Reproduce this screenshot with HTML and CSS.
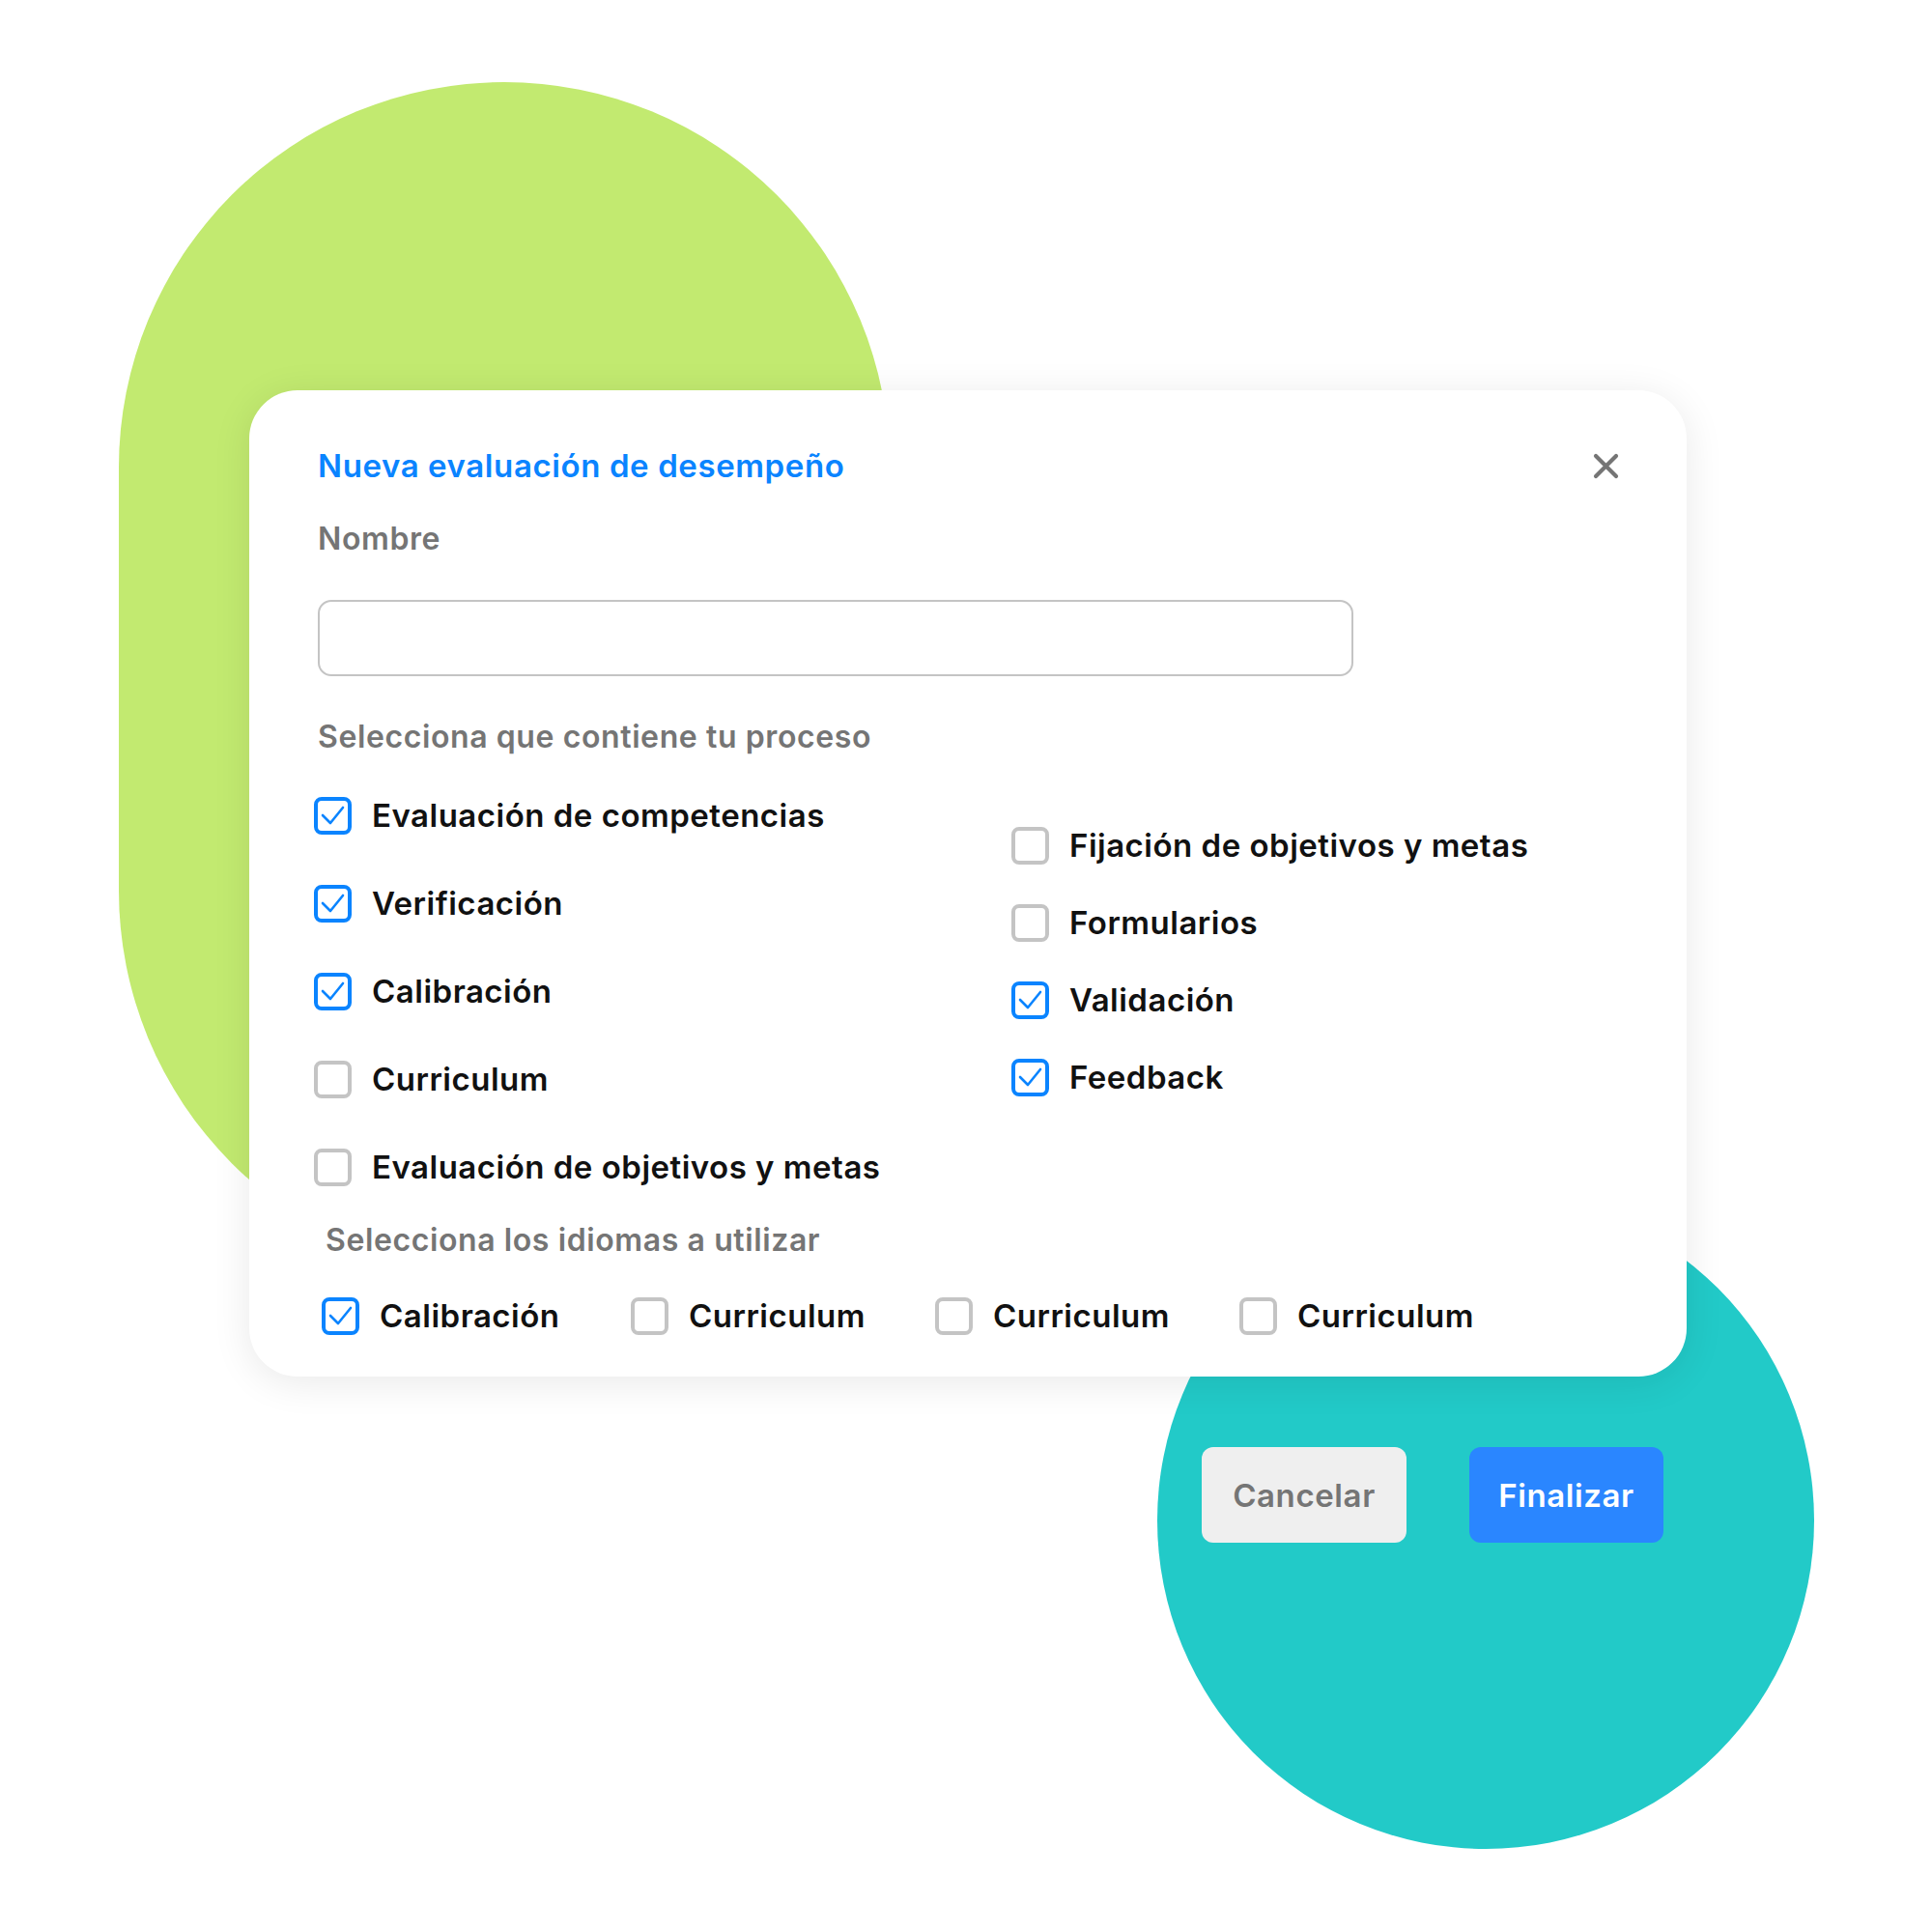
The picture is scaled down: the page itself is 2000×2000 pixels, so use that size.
FILE: index.html
```html
<!DOCTYPE html>
<html lang="es">
<head>
    <meta charset="UTF-8">
    <meta name="viewport" content="width=device-width, initial-scale=1.0">
    <title>Nueva evaluación de desempeño</title>
    <link rel="stylesheet" href="styles.css">
</head>
<body>
    <div class="stage">
        <div class="blob blob-green"></div>
        <div class="blob blob-teal"></div>

        <div class="modal">
            <div class="modal-head">
                <h2 class="modal-title">Nueva evaluación de desempeño</h2>
                <button class="close-btn" aria-label="Cerrar">
                    <svg width="27" height="27" viewBox="0 0 27 27"><path d="M3 3L24 24M24 3L3 24" stroke="#757575" stroke-width="4.2" stroke-linecap="round"/></svg>
                </button>
            </div>

            <div class="field-label">Nombre</div>
            <input type="text" class="text-input">

            <div class="section-label">Selecciona que contiene tu proceso</div>

            <div class="options">
                <div class="col col-left">
                    <label class="check"><span class="box on"></span>Evaluación de competencias</label>
                    <label class="check"><span class="box on"></span>Verificación</label>
                    <label class="check"><span class="box on"></span>Calibración</label>
                    <label class="check"><span class="box"></span>Curriculum</label>
                    <label class="check"><span class="box"></span>Evaluación de objetivos y metas</label>
                </div>
                <div class="col col-right">
                    <label class="check"><span class="box"></span>Fijación de objetivos y metas</label>
                    <label class="check"><span class="box"></span>Formularios</label>
                    <label class="check"><span class="box on"></span>Validación</label>
                    <label class="check"><span class="box on"></span>Feedback</label>
                </div>
            </div>

            <div class="section-label lang-label">Selecciona los idiomas a utilizar</div>

            <div class="langs">
                <label class="check"><span class="box on"></span>Calibración</label>
                <label class="check"><span class="box"></span>Curriculum</label>
                <label class="check"><span class="box"></span>Curriculum</label>
                <label class="check"><span class="box"></span>Curriculum</label>
            </div>
        </div>

        <div class="actions">
            <button class="btn btn-cancel">Cancelar</button>
            <button class="btn btn-primary">Finalizar</button>
        </div>
    </div>
</body>
</html>
```

FILE: styles.css
```css
body {
    margin: 0;
    background: #ffffff;
    font-family: Inter, "Noto Sans", sans-serif;
}
.stage {
    position: relative;
    width: 2000px;
    height: 2000px;
    padding: 404px 0 0 258px;
    box-sizing: border-box;
    overflow: hidden;
}
.blob {
    position: absolute;
    z-index: 0;
}
.blob-green {
    left: 123px;
    top: 85px;
    width: 798px;
    height: 1236px;
    border-radius: 400px;
    background-color: #c2ea70;
}
.blob-teal {
    left: 1198px;
    top: 1234px;
    width: 680px;
    height: 680px;
    border-radius: 50%;
    background-color: #22cac8;
}
.modal {
    position: relative;
    z-index: 1;
    width: 1488px;
    box-sizing: border-box;
    padding: 58px 71px 43px 71px;
    background: #ffffff;
    border-radius: 50px;
    box-shadow: 0 6px 40px rgba(0, 0, 0, 0.09);
}
.modal-head {
    display: flex;
    align-items: center;
    justify-content: space-between;
    height: 40px;
}
.modal-title {
    margin: 0;
    font-size: 33px;
    line-height: 40px;
    font-weight: 600;
    letter-spacing: 0.6px;
    color: #0a84ff;
}
.close-btn {
    border: none;
    background: none;
    padding: 0;
    margin-right: -1px;
    width: 27px;
    height: 27px;
    cursor: pointer;
}
.close-btn svg {
    display: block;
}
.field-label {
    margin-top: 36px;
    font-size: 32px;
    line-height: 40px;
    font-weight: 600;
    letter-spacing: 0.6px;
    color: #757575;
}
.text-input {
    display: block;
    margin-top: 43px;
    width: 1072px;
    height: 79px;
    box-sizing: border-box;
    border: 2px solid #c4c4c4;
    border-radius: 14px;
    background: #fff;
    outline: none;
}
.section-label {
    margin-top: 43px;
    font-size: 32px;
    line-height: 40px;
    font-weight: 600;
    letter-spacing: 0.6px;
    color: #757575;
}
.options {
    display: flex;
    margin-top: 41px;
    margin-left: -4px;
}
.col {
    display: flex;
    flex-direction: column;
}
.col-left {
    width: 722px;
    gap: 51px;
}
.col-right {
    margin-top: 31px;
    gap: 40px;
}
.check {
    display: flex;
    align-items: center;
    gap: 21px;
    height: 40px;
    font-size: 33px;
    font-weight: 600;
    letter-spacing: 0.5px;
    color: #111111;
    white-space: nowrap;
}
.box {
    flex: none;
    width: 39px;
    height: 39px;
    box-sizing: border-box;
    border: 4px solid #c4c4c4;
    border-radius: 8px;
}
.box.on {
    border-color: #0a84ff;
    background: url("data:image/svg+xml,%3Csvg xmlns='http://www.w3.org/2000/svg' width='31' height='31' viewBox='0 0 31 31'%3E%3Cpath d='M5 15L13 23L26 7' fill='none' stroke='%230a84ff' stroke-width='2.6' stroke-linecap='round' stroke-linejoin='round'/%3E%3C/svg%3E") center / 31px 31px no-repeat;
}
.lang-label {
    margin-top: 36px;
    margin-left: 8px;
}
.langs {
    display: grid;
    grid-template-columns: 320px 315px 315px auto;
    margin-top: 38px;
    margin-left: 4px;
}
.actions {
    position: relative;
    z-index: 1;
    display: flex;
    justify-content: flex-end;
    gap: 65px;
    width: 1488px;
    margin-top: 73px;
    padding-right: 24px;
    box-sizing: border-box;
}
.btn {
    height: 99px;
    border: none;
    border-radius: 12px;
    font-family: inherit;
    font-size: 33px;
    font-weight: 600;
    letter-spacing: 0.6px;
    cursor: pointer;
}
.btn-cancel {
    width: 212px;
    background-color: #efefef;
    color: #757575;
}
.btn-primary {
    width: 201px;
    background-color: #2a86ff;
    color: #ffffff;
}
```
